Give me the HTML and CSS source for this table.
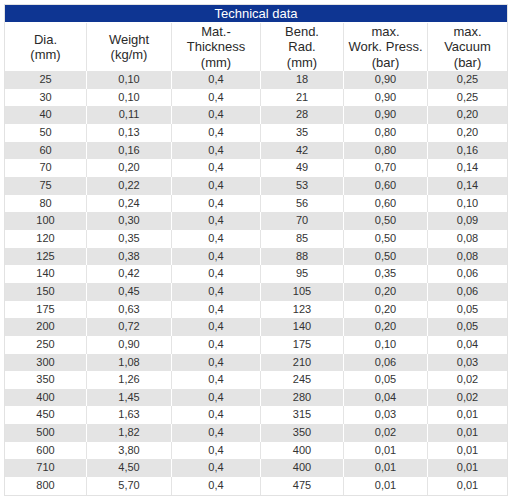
FILE: index.html
```html
<!DOCTYPE html>
<html>
<head>
<meta charset="utf-8">
<link rel="stylesheet" href="styles.css">
</head>
<body>
<table class="tech">
  <colgroup>
    <col class="c1"><col class="c2"><col class="c3"><col class="c4"><col class="c5"><col class="c6">
  </colgroup>
  <thead>
    <tr class="title"><th colspan="6">Technical data</th></tr>
    <tr class="heads">
      <th>Dia.<br>(mm)</th>
      <th>Weight<br>(kg/m)</th>
      <th>Mat.-<br>Thickness<br>(mm)</th>
      <th>Bend.<br>Rad.<br>(mm)</th>
      <th>max.<br>Work. Press.<br>(bar)</th>
      <th>max.<br>Vacuum<br>(bar)</th>
    </tr>
  </thead>
  <tbody>
    <tr><td>25</td><td>0,10</td><td>0,4</td><td>18</td><td>0,90</td><td>0,25</td></tr>
    <tr><td>30</td><td>0,10</td><td>0,4</td><td>21</td><td>0,90</td><td>0,25</td></tr>
    <tr><td>40</td><td>0,11</td><td>0,4</td><td>28</td><td>0,90</td><td>0,20</td></tr>
    <tr><td>50</td><td>0,13</td><td>0,4</td><td>35</td><td>0,80</td><td>0,20</td></tr>
    <tr><td>60</td><td>0,16</td><td>0,4</td><td>42</td><td>0,80</td><td>0,16</td></tr>
    <tr><td>70</td><td>0,20</td><td>0,4</td><td>49</td><td>0,70</td><td>0,14</td></tr>
    <tr><td>75</td><td>0,22</td><td>0,4</td><td>53</td><td>0,60</td><td>0,14</td></tr>
    <tr><td>80</td><td>0,24</td><td>0,4</td><td>56</td><td>0,60</td><td>0,10</td></tr>
    <tr><td>100</td><td>0,30</td><td>0,4</td><td>70</td><td>0,50</td><td>0,09</td></tr>
    <tr><td>120</td><td>0,35</td><td>0,4</td><td>85</td><td>0,50</td><td>0,08</td></tr>
    <tr><td>125</td><td>0,38</td><td>0,4</td><td>88</td><td>0,50</td><td>0,08</td></tr>
    <tr><td>140</td><td>0,42</td><td>0,4</td><td>95</td><td>0,35</td><td>0,06</td></tr>
    <tr><td>150</td><td>0,45</td><td>0,4</td><td>105</td><td>0,20</td><td>0,06</td></tr>
    <tr><td>175</td><td>0,63</td><td>0,4</td><td>123</td><td>0,20</td><td>0,05</td></tr>
    <tr><td>200</td><td>0,72</td><td>0,4</td><td>140</td><td>0,20</td><td>0,05</td></tr>
    <tr><td>250</td><td>0,90</td><td>0,4</td><td>175</td><td>0,10</td><td>0,04</td></tr>
    <tr><td>300</td><td>1,08</td><td>0,4</td><td>210</td><td>0,06</td><td>0,03</td></tr>
    <tr><td>350</td><td>1,26</td><td>0,4</td><td>245</td><td>0,05</td><td>0,02</td></tr>
    <tr><td>400</td><td>1,45</td><td>0,4</td><td>280</td><td>0,04</td><td>0,02</td></tr>
    <tr><td>450</td><td>1,63</td><td>0,4</td><td>315</td><td>0,03</td><td>0,01</td></tr>
    <tr><td>500</td><td>1,82</td><td>0,4</td><td>350</td><td>0,02</td><td>0,01</td></tr>
    <tr><td>600</td><td>3,80</td><td>0,4</td><td>400</td><td>0,01</td><td>0,01</td></tr>
    <tr><td>710</td><td>4,50</td><td>0,4</td><td>400</td><td>0,01</td><td>0,01</td></tr>
    <tr><td>800</td><td>5,70</td><td>0,4</td><td>475</td><td>0,01</td><td>0,01</td></tr>
  </tbody>
</table>
</body>
</html>
```

FILE: styles.css
```css
html, body {
  margin: 0;
  padding: 0;
  background: #fff;
}
body {
  padding: 4px;
  font-family: "Liberation Sans", Arial, sans-serif;
  color: #333;
}
.tech {
  width: 504px;
  table-layout: fixed;
  border-collapse: separate;
  border-spacing: 0;
  border: 1px solid #e2e2e2;
}
.c1 { width: 81px; }
.c2 { width: 85px; }
.c3 { width: 89px; }
.c4 { width: 83px; }
.c5 { width: 84px; }
.c6 { width: 80px; }
.tech th, .tech td {
  padding: 0;
  text-align: center;
  font-weight: normal;
}
.title th {
  background: #0e3592;
  color: #fff;
  font-size: 13px;
  line-height: 17px;
  height: 17px;
  border-bottom: 1px solid #fff;
}
.heads th {
  font-size: 13px;
  line-height: 15.3px;
  padding: 1px 0;
  height: 46px;
  vertical-align: middle;
  color: #2a2a2a;
  border-left: 1px solid #e4e4e4;
}
.heads th:first-child { border-left: none; }
.tech td {
  font-size: 11px;
  line-height: 13.65px;
  padding: 2px 0;
  border-left: 1px solid #e4e4e4;
  background: #fff;
}
.tech td:first-child { border-left: none; }
.tech tbody tr:nth-child(odd) td {
  background: #e4e4e4;
  border-left-color: #fff;
}
.tech tbody tr:nth-child(odd) td:first-child { border-left: none; }
```
